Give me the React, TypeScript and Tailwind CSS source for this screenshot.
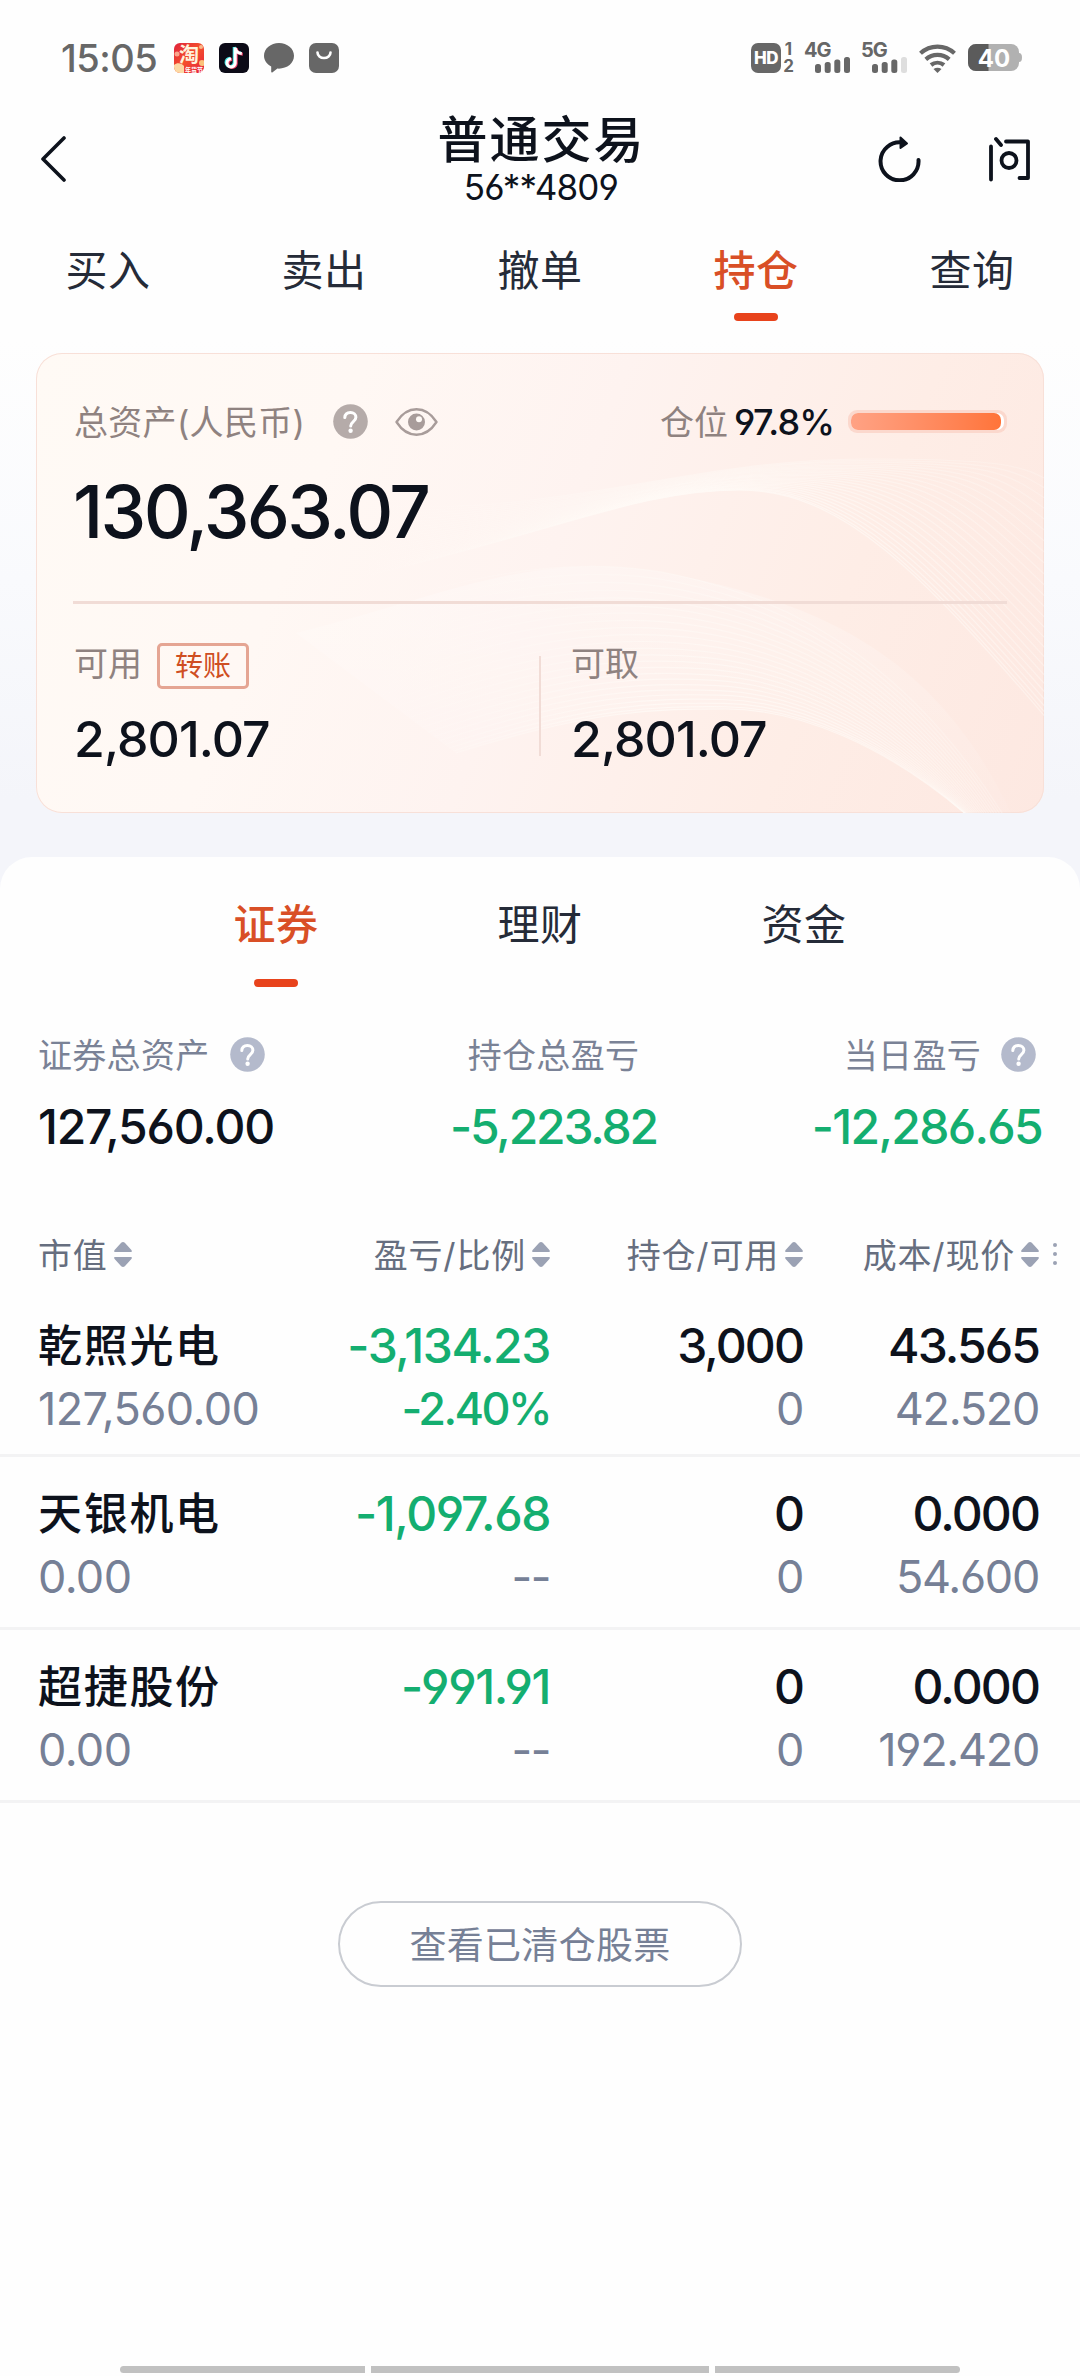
import type { ReactNode } from "react";

import clsx from "clsx";

interface Holding {
  available: string;
  cost: string;
  marketValue: string;
  name: string;
  position: string;
  price: string;
  profit: string;
  ratio: string;
}

const mainTabs = ["买入", "卖出", "撤单", "持仓", "查询"];
const assetTabs = ["证券", "理财", "资金"];

const holdings: Holding[] = [
  {
    available: "0",
    cost: "43.565",
    marketValue: "127,560.00",
    name: "乾照光电",
    position: "3,000",
    price: "42.520",
    profit: "-3,134.23",
    ratio: "-2.40%",
  },
  {
    available: "0",
    cost: "0.000",
    marketValue: "0.00",
    name: "天银机电",
    position: "0",
    price: "54.600",
    profit: "-1,097.68",
    ratio: "--",
  },
  {
    available: "0",
    cost: "0.000",
    marketValue: "0.00",
    name: "超捷股份",
    position: "0",
    price: "192.420",
    profit: "-991.91",
    ratio: "--",
  },
];

const TaobaoIcon = () => (
  <svg className="size-[30px]" viewBox="0 0 30 30">
    <defs>
      <linearGradient id="tb" x1="0" x2="1" y1="0" y2="1">
        <stop offset="0" stopColor="#e0223c" />
        <stop offset="0.5" stopColor="#f4502c" />
        <stop offset="1" stopColor="#e61f3f" />
      </linearGradient>
    </defs>
    <rect fill="url(#tb)" height="30" rx="6" width="30" />
    <circle cx="3" cy="11" fill="#f9a58c" r="2.5" />
    <circle cx="27" cy="4" fill="#f9b98c" r="2" />
    <circle cx="28" cy="20" fill="#fbc27a" r="3" />
    <path d="M0 22c3-3 8-2 10 1v7H6a6 6 0 0 1-6-6z" fill="#fcd9a4" />
    <text fill="#fff3dc" fontSize="20" fontWeight="700" textAnchor="middle" x="15" y="18.5">
      淘
    </text>
    <text fill="#fff" fontSize="6" fontWeight="700" x="11" y="28.5">
      年货节
    </text>
  </svg>
);

const DouyinIcon = () => (
  <svg className="size-[30px]" fill="none" viewBox="0 0 30 30">
    <rect fill="#0c0b17" height="30" rx="6" width="30" />
    <g strokeWidth="3">
      <path d="M15.2 4v15.5a4.1 4.1 0 1 1-4.1-4.3M15.2 4c.3 3.4 2.6 5.6 6.6 6" stroke="#3fe6e4" />
      <path d="M17.2 5.2v15.5a4.1 4.1 0 1 1-4.1-4.3M17.2 5.2c.3 3.4 2.6 5.6 6.6 6" stroke="#f4426c" />
      <path d="M16.2 4.6v15.5a4.1 4.1 0 1 1-4.1-4.3M16.2 4.6c.3 3.4 2.6 5.6 6.6 6" stroke="#fff" />
    </g>
  </svg>
);

const ChatIcon = () => (
  <svg className="size-[30px]" fill="#676767" viewBox="0 0 30 30">
    <path d="M15 0C6.7 0 0 5.6 0 12.8c0 4.6 2.8 8.5 7.2 10.8v5.2c0 .7.6 1 1.1.6l5.1-3.8c9.4.6 16.6-5.2 16.6-12.8C30 5.6 23.3 0 15 0Z" />
  </svg>
);

const BagIcon = () => (
  <svg className="size-[30px]" fill="none" viewBox="0 0 30 30">
    <rect fill="#676767" height="30" rx="7" width="30" />
    <path d="M8.5 9.5a6.5 5.5 0 0 0 13 0" stroke="#fff" strokeLinecap="round" strokeWidth="2.6" />
  </svg>
);

const SignalBars = ({ dimLast }: { dimLast?: boolean }) => (
  <svg className="h-4 w-[35px]" fill="#676767" viewBox="0 0 35 16">
    <rect height="9" rx="2.5" width="6" x="0" y="7" />
    <rect height="11" rx="2.5" width="6" x="9.7" y="5" />
    <rect height="13.5" rx="2.5" width="6" x="19.3" y="2.5" />
    <rect fill={dimLast ? "#dedede" : "#676767"} height="16" rx="2.5" width="6" x="29" y="0" />
  </svg>
);

const Signal = ({ dimLast, label }: { dimLast?: boolean; label: string }) => (
  <div className="flex h-[30px] w-[45px] flex-col">
    <span className="-ml-px h-[14px] text-[20px] leading-[15px] font-bold tracking-[-1px]">{label}</span>
    <div className="flex justify-end">
      <SignalBars dimLast={dimLast} />
    </div>
  </div>
);

const WifiIcon = () => (
  <svg className="ml-3 h-[30px] w-[37px]" fill="none" stroke="#676767" strokeWidth="4.2" viewBox="0 0 37 30">
    <path d="M1.5 10.2a25 25 0 0 1 34 0" />
    <path d="M6.8 16.4a17.5 17.5 0 0 1 23.4 0" />
    <path d="M12 22a10.5 10.5 0 0 1 13 0" />
    <path d="M14.5 26q4-2.6 8 0L18.5 30Z" fill="#676767" stroke="none" />
  </svg>
);

const BatteryIcon = () => (
  <svg className="ml-3 h-[28px] w-[54px]" viewBox="0 0 54 28">
    <defs>
      <clipPath id="battery">
        <rect height="27" rx="8" width="51" y="0" />
      </clipPath>
    </defs>
    <g clipPath="url(#battery)">
      <rect fill="#b1b1b1" height="28" width="51" />
      <rect fill="#5b5b5b" height="28" width="20.5" />
    </g>
    <path d="M51 9c2 0 3 1.5 3 4.5S53 18 51 18Z" fill="#b1b1b1" />
    <text fill="#fff" fontSize="24" fontWeight="700" textAnchor="middle" x="26" y="22.5">
      40
    </text>
  </svg>
);

const StatusBar = () => (
  <div className="flex h-[112px] items-center justify-between pt-1 pr-[58px] pl-[61px] text-[#676767]">
    <div className="flex items-center gap-[15px]">
      <span className="w-[98px] text-[38px] leading-none font-medium tracking-[-0.5px] whitespace-nowrap">15:05</span>
      <TaobaoIcon />
      <DouyinIcon />
      <ChatIcon />
      <BagIcon />
    </div>
    <div className="flex items-center">
      <span className="flex size-[30px] items-center justify-center rounded-[7px] bg-[#676767] text-[17px] leading-none font-extrabold tracking-[-0.5px] text-white">
        HD
      </span>
      <span className="mr-3 ml-[3px] flex w-[9px] flex-col items-center text-[17px] leading-[17px] font-bold">
        <span>1</span>
        <span>2</span>
      </span>
      <Signal label="4G" />
      <div className="w-3" />
      <Signal dimLast label="5G" />
      <WifiIcon />
      <BatteryIcon />
    </div>
  </div>
);

const Header = () => (
  <header className="flex h-[98px] items-start justify-between pr-[49px] pl-[40px] text-[#0d121c]">
    <svg className="mt-6 h-[46px] w-[164px]" fill="none" viewBox="0 0 164 46">
      <path d="M24 2 3 23l21 21" stroke="#0d121c" strokeLinecap="round" strokeLinejoin="round" strokeWidth="3.6" />
    </svg>
    <div className="flex flex-col items-center">
      <h1 className="pt-[3px] pl-px text-[50px] leading-[50px] font-medium tracking-[2px]">普通交易</h1>
      <p className="text-[35px] leading-[45px] tracking-[-0.8px]">56**4809</p>
    </div>
    <div className="mt-6 flex w-[153px] justify-between">
      <svg className="h-[46px] w-[44px]" fill="none" viewBox="0 0 44 46">
        <path d="M24 6.5A19 19 0 1 0 40.5 24" stroke="#0d121c" strokeLinecap="round" strokeWidth="4" />
        <path d="M22.5 1.5V12l6.5-4.5Z" fill="#0d121c" stroke="#0d121c" strokeLinejoin="round" strokeWidth="2" />
      </svg>
      <svg className="h-[46px] w-[44px]" fill="none" stroke="#0d121c" strokeLinecap="round" strokeWidth="3.8" viewBox="0 0 44 46">
        <path d="M4 10.5v33M9 3l5 6M19 5.500h22V42h-8.500" strokeLinejoin="round" />
        <circle cx="22" cy="24.5" r="7.5" />
      </svg>
    </div>
  </header>
);

interface TabBarProps {
  active: string;
  className?: string;
  gapClass: string;
  itemClass: string;
  tabs: string[];
}

const TabBar = ({ active, className, gapClass, itemClass, tabs }: TabBarProps) => (
  <nav className={clsx("flex justify-center", className)}>
    {tabs.map((tab) => (
      <button className={clsx("flex flex-col items-center", itemClass)} key={tab}>
        <span
          className={clsx(
            "text-[42px] leading-[60px] tracking-[0.5px]",
            tab === active ? "font-medium text-[#d94f26]" : "text-[#252b38]"
          )}
        >
          {tab}
        </span>
        <span className={clsx("h-2 w-11 rounded-full", gapClass, tab === active && "bg-[#e8431c]")} />
      </button>
    ))}
  </nav>
);

const HelpIcon = ({ className }: { className?: string }) => (
  <svg className={clsx("size-[35px]", className)} fill="none" viewBox="0 0 35 35">
    <circle cx="17.5" cy="17.5" fill="currentColor" r="17.3" />
    <path
      d="M11.8 13.6c.2-3.2 2.5-5.1 5.6-5.1 3.2 0 5.5 1.9 5.5 4.8 0 4.3-5.2 4.3-5.2 8.7"
      stroke="#fff"
      strokeLinecap="round"
      strokeWidth="3"
    />
    <circle cx="17.6" cy="26.7" fill="#fff" r="2.2" />
  </svg>
);

const EyeIcon = () => (
  <svg className="h-7 w-[43px]" fill="none" viewBox="0 0 43 28">
    <path
      d="M1.5 14C7 5.5 13.5 1.3 21.5 1.3S36 5.5 41.5 14C36 22.5 29.5 26.7 21.5 26.7S7 22.5 1.5 14Z"
      stroke="#a89c9a"
      strokeLinejoin="round"
      strokeWidth="2.4"
    />
    <circle cx="21.5" cy="14" fill="#a89c9a" r="8.5" />
    <circle cx="24" cy="11.3" fill="#fffaf6" r="3" />
  </svg>
);

const lerp = (a: number[], b: number[], t: number) => a.map((v, i) => v + (b[i] - v) * t);

const toCurve = (p: number[]) =>
  `M${p[0]} ${p[1]}C${p[2]} ${p[3]} ${p[4]} ${p[5]} ${p[6]} ${p[7]}S${p[8]} ${p[9]} ${p[10]} ${p[11]}`;

// Each sheaf is a bundle of curves blended between two outer curves
const sheaves = [
  {
    count: 26,
    from: [300, 230, 520, 180, 600, 137, 702, 137, 880, 210, 1040, 400],
    to: [300, 150, 520, 170, 640, 106, 830, 106, 980, 118, 1060, 150],
  },
  {
    count: 24,
    from: [420, 400, 560, 356, 620, 356, 690, 356, 850, 390, 940, 470],
    to: [260, 280, 420, 220, 540, 200, 640, 222, 900, 300, 1020, 560],
  },
];

const CardWaves = () => (
  <svg className="absolute inset-0 size-full" fill="none" preserveAspectRatio="none" viewBox="0 0 1008 460">
    <defs>
      <linearGradient gradientUnits="userSpaceOnUse" id="wave" x1="300" x2="1008" y1="0" y2="0">
        <stop offset="0" stopColor="#fffaf6" stopOpacity="0" />
        <stop offset="0.45" stopColor="#fffaf6" stopOpacity="0.9" />
        <stop offset="1" stopColor="#fffaf6" stopOpacity="0.5" />
      </linearGradient>
      <linearGradient id="glow" x1="0" x2="0" y1="0" y2="1">
        <stop offset="0" stopColor="#fff" stopOpacity="0.5" />
        <stop offset="1" stopColor="#fff" stopOpacity="0.1" />
      </linearGradient>
    </defs>
    <path
      d="M420 400C560 356 620 356 690 356S850 390 932 460H975C900 300 780 250 640 222S420 240 260 280Z"
      fill="url(#glow)"
      opacity="0.5"
    />
    {sheaves.map(({ count, from, to }, s) =>
      Array.from({ length: count }, (_, i) => (
        <path
          d={toCurve(lerp(from, to, (i / (count - 1)) ** 1.3))}
          key={`${s}-${i}`}
          stroke="url(#wave)"
          strokeOpacity={0.9 - (i / count) * 0.4}
          strokeWidth={1.2}
        />
      ))
    )}
  </svg>
);

const AssetCard = () => (
  <section className="relative mx-9 mt-8 h-[460px] overflow-hidden rounded-[26px] bg-[linear-gradient(112deg,#fffaf5_0%,#fff8f4_28%,#fef3f0_50%,#feede6_76%,#fde8e1_100%)] ring-1 ring-[#f8e0d8] ring-inset">
    <CardWaves />
    <div className="relative px-[37px] pt-[51px]">
      <div className="flex h-[35px] items-center justify-between text-[34px] leading-[34px] text-[#8f8280]">
        <div className="flex items-center pl-px">
          <span className="pt-[3px] tracking-[0.3px]">总资产(人民币)</span>
          <HelpIcon className="ml-7 text-[#b5aba9]" />
          <span className="ml-[27px]">
            <EyeIcon />
          </span>
        </div>
        <div className="flex items-center">
          <span className="pt-[3px]">仓位</span>
          <span className="ml-[6px] pt-px text-[36px] font-[450] tracking-[-0.9px] text-[#0d121c]">97.8%</span>
          <div className="ml-[14px] h-[23px] w-[159px] rounded-[9px] bg-[#fbd8cd] p-[3px]">
            <div className="h-full rounded-[7px] bg-white">
              <div
                className="h-full rounded-[7px] bg-linear-to-r from-[#ffa284] to-[#ff7439]"
                style={{ width: "97.8%" }}
              />
            </div>
          </div>
        </div>
      </div>

      <p className="mt-[33px] text-[73px] leading-[80px] font-[450] tracking-[-2.7px] text-[#0d121c]">130,363.07</p>
      <div className="mt-[49px] h-[3px] bg-[#f1dcd6]" />

      <div className="flex">
        <div className="mt-[39px] w-[466px] pl-px">
          <div className="flex h-[46px] items-center">
            <span className="-mt-1 text-[34px] leading-[34px] text-[#8f8280]">可用</span>
            <button className="ml-[15px] flex h-[46px] w-[92px] items-center justify-center rounded-[5px] border-[3px] border-[#e5a593] text-[28px] leading-none text-[#cf4e22]">
              转账
            </button>
          </div>
          <p className="mt-5 text-[50px] leading-[60px] font-[450] tracking-[-0.9px] text-[#0d121c]">2,801.07</p>
        </div>
        <div className="mt-[52px] h-[100px] w-[2px] bg-[#f1dcd6]" />
        <div className="mt-[39px] pl-[30px]">
          <div className="flex h-[46px] items-center">
            <span className="-mt-1 text-[34px] leading-[34px] text-[#8f8280]">可取</span>
          </div>
          <p className="mt-5 text-[50px] leading-[60px] font-[450] tracking-[-0.9px] text-[#0d121c]">2,801.07</p>
        </div>
      </div>
    </div>
  </section>
);

interface SummaryItemProps {
  className: string;
  help?: boolean;
  label: string;
  value: string;
  valueClass: string;
}

const SummaryItem = ({ className, help, label, value, valueClass }: SummaryItemProps) => (
  <div className={clsx("flex flex-col", className)}>
    <div className="flex h-[35px] items-center text-[34px] leading-[34px] text-[#7a8296]">
      <span className="pt-[3px] tracking-[0.3px]">{label}</span>
      {help && <HelpIcon className="mr-[6px] ml-5 text-[#b4bacc]" />}
    </div>
    <span className={clsx("mt-[25px] text-[48px] leading-[60px] font-[450]", valueClass)}>{value}</span>
  </div>
);

const SortIcon = () => (
  <svg className="ml-[6px] h-[25px] w-[18px] shrink-0" fill="#9ba2b4" viewBox="0 0 18 25">
    <path d="M9 0q1 0 1.8.8L17.4 8Q18.6 10 17 10H1Q-.6 10 .6 8L7.2.8Q8 0 9 0ZM9 25q1 0 1.8-.8L17.4 17Q18.6 15 17 15H1Q-.6 15 .6 17L7.2 24.2Q8 25 9 25Z" />
  </svg>
);

const HeadCell = ({ children, className }: { children: ReactNode; className: string }) => (
  <div className={clsx("flex h-[34px] items-center text-[34px] leading-[34px] text-[#666e7f]", className)}>
    <span className="pt-[3px] tracking-[0.8px]">{children}</span>
    <SortIcon />
  </div>
);

const colWidths = ["w-[261px]", "w-[251px]", "w-[253px]", "w-[236px]"];

interface CellProps {
  bottom: string;
  bottomClass?: string;
  className: string;
  top: string;
  topClass?: string;
}

const Cell = ({
  bottom,
  bottomClass = "text-[#768096] tracking-[-1.3px]",
  className,
  top,
  topClass = "text-[48px] font-[450] tracking-[-1.9px] text-[#0d121c]",
}: CellProps) => (
  <div className={clsx("flex flex-col", className)}>
    <span className={clsx("leading-[60px]", topClass)}>{top}</span>
    <span className={clsx("mt-[3px] text-[45px] leading-[60px]", bottomClass)}>{bottom}</span>
  </div>
);

const HoldingRow = ({ className, item }: { className: string; item: Holding }) => (
  <div className={clsx("flex shrink-0 border-b-[3px] border-[#f3f3f4] pl-[38px]", className)}>
    <Cell
      bottom={item.marketValue}
      bottomClass="text-[#768096] tracking-[-0.6px]"
      className={colWidths[0]}
      top={item.name}
      topClass="text-[44px] font-medium tracking-[1.7px] text-[#0d121c]"
    />
    <Cell
      bottom={item.ratio}
      bottomClass={item.ratio === "--" ? "text-[#768096] tracking-[-1.5px]" : "font-[450] tracking-[-2.6px] text-[#14ae70]"}
      className={clsx("items-end", colWidths[1])}
      top={item.profit}
      topClass="text-[48px] font-[450] tracking-[-1.4px] text-[#14ae70]"
    />
    <Cell bottom={item.available} className={clsx("items-end", colWidths[2])} top={item.position} />
    <Cell bottom={item.price} className={clsx("items-end", colWidths[3])} top={item.cost} />
  </div>
);

const App = () => (
  <div className="flex h-[2376px] w-[1080px] flex-col overflow-hidden bg-[linear-gradient(180deg,#fefefe_340px,#f9fafd_580px,#f4f5fa_800px)] font-['Inter','Noto_Sans_CJK_SC',sans-serif] [font-feature-settings:'cv03','cv04']">
    <StatusBar />
    <Header />
    <TabBar active="持仓" className="mt-[31px]" gapClass="mt-3" itemClass="w-[216px]" tabs={mainTabs} />
    <AssetCard />

    <main className="mt-11 flex flex-1 flex-col rounded-t-[32px] bg-[#fefefe] pt-[38px]">
      <TabBar active="证券" gapClass="mt-6" itemClass="w-[264px]" tabs={assetTabs} />

      <div className="mt-[50px] flex justify-between px-[38px]">
        <SummaryItem
          className="w-[341px] items-start"
          help
          label="证券总资产"
          value="127,560.00"
          valueClass="tracking-[-1.2px] text-[#0d121c]"
        />
        <SummaryItem
          className="items-center"
          label="持仓总盈亏"
          value="-5,223.82"
          valueClass="tracking-[-2.2px] text-[#14ae70]"
        />
        <SummaryItem
          className="w-[314px] items-end"
          help
          label="当日盈亏"
          value="-12,286.65"
          valueClass="tracking-[-1.7px] text-[#14ae70]"
        />
      </div>

      <div className="mt-[80px] flex items-center pl-[38px]">
        <HeadCell className={colWidths[0]}>市值</HeadCell>
        <HeadCell className={clsx("justify-end", colWidths[1])}>盈亏/比例</HeadCell>
        <HeadCell className={clsx("justify-end", colWidths[2])}>持仓/可用</HeadCell>
        <HeadCell className={clsx("justify-end", colWidths[3])}>成本/现价</HeadCell>
        <div className="ml-[14px] flex flex-col gap-[5px]">
          <span className="size-1 rounded-full bg-[#9ba2b4]" />
          <span className="size-1 rounded-full bg-[#9ba2b4]" />
          <span className="size-1 rounded-full bg-[#9ba2b4]" />
        </div>
      </div>

      {holdings.map((item, i) => (
        <HoldingRow className={i === 0 ? "h-[186px] pt-[45px]" : "h-[173px] pt-[27px]"} item={item} key={item.name} />
      ))}

      <button className="mx-auto mt-[98px] h-[86px] w-[404px] shrink-0 rounded-full border-2 border-[#c9ccd2] pt-[2px] text-[37px] leading-none tracking-[0.3px] text-[#768096]">
        查看已清仓股票
      </button>

      <div className="mt-auto mb-[3px] flex justify-center gap-[6px]">
        <span className="h-[7px] w-[245px] rounded-l-full bg-[#c1c1c1]" />
        <span className="h-[7px] w-[338px] bg-[#c1c1c1]" />
        <span className="h-[7px] w-[245px] rounded-r-full bg-[#c1c1c1]" />
      </div>
    </main>
  </div>
);

export default App;
